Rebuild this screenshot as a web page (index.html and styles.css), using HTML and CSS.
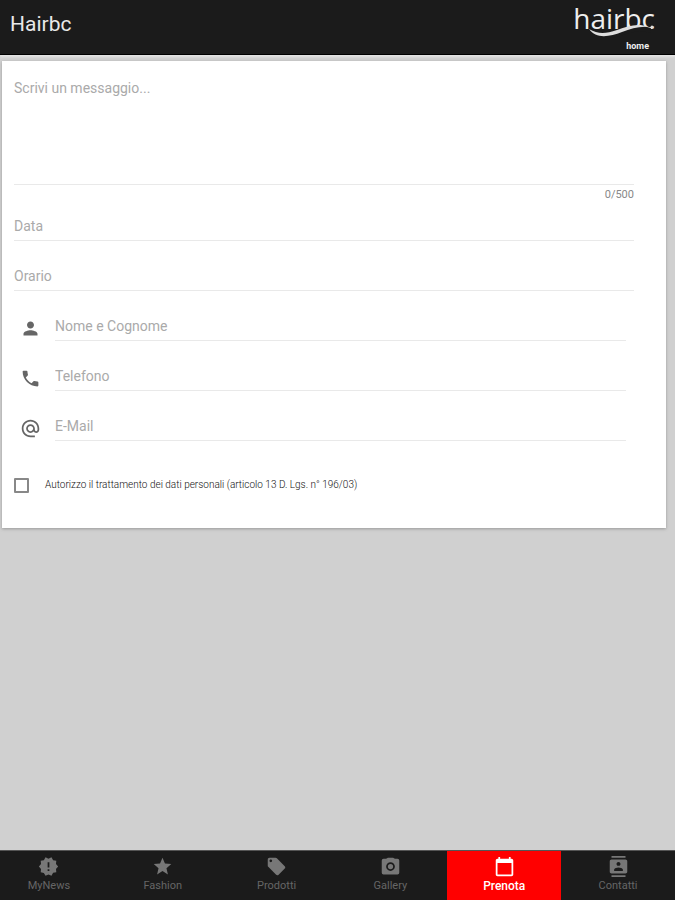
FILE: index.html
```html
<!DOCTYPE html>
<html lang="it">
<head>
    <meta charset="utf-8">
    <meta name="viewport" content="width=device-width, initial-scale=1">
    <title>Hairbc</title>
    <link rel="stylesheet" href="styles.css">
</head>
<body>

<header class="topbar">
  <h1>Hairbc</h1>
  <a class="logo" href="#">
    <span class="logo-name">hairbc</span>
    <svg class="swoosh" viewBox="0 0 66 16" aria-hidden="true">
      <path d="M20 12C36 8 42 3 54 4L62 6L61 11C46 7 40 12 24 16Z" fill="#1b1b1b"/>
      <path d="M0 7C9 12 16 12 28 8C40 4 48 1 60 5C50 4 42 7 33 10C20 15 7 17 0 7Z" fill="#ddd"/>
      <circle cx="63" cy="5" r="1.500" fill="#ddd"/>
    </svg>
    <span class="logo-sub">home</span>
  </a>
</header>

<main>
  <form class="card">
    <textarea class="message" aria-label="Messaggio" maxlength="500" placeholder="Scrivi un messaggio..."></textarea>
    <div class="counter">0/500</div>

    <input class="field" type="text" aria-label="Data" placeholder="Data">
    <input class="field" type="text" aria-label="Orario" placeholder="Orario">

    <div class="row">
      <label for="nome"><svg viewBox="0 0 24 24"><path d="M12 12c2.21 0 4-1.79 4-4s-1.79-4-4-4-4 1.79-4 4 1.79 4 4 4zm0 2c-2.67 0-8 1.34-8 4v2h16v-2c0-2.66-5.33-4-8-4z"/></svg></label>
      <input class="field" id="nome" type="text" aria-label="Nome e Cognome" placeholder="Nome e Cognome">
    </div>
    <div class="row">
      <label for="tel"><svg viewBox="0 0 24 24"><path d="M6.62 10.79c1.44 2.83 3.76 5.14 6.59 6.59l2.2-2.2c.27-.27.67-.36 1.02-.24 1.12.37 2.33.57 3.57.57.55 0 1 .45 1 1V20c0 .55-.45 1-1 1-9.39 0-17-7.61-17-17 0-.55.45-1 1-1h3.5c.55 0 1 .45 1 1 0 1.25.2 2.45.57 3.57.11.35.03.74-.25 1.02l-2.2 2.2z"/></svg></label>
      <input class="field" id="tel" type="tel" aria-label="Telefono" placeholder="Telefono">
    </div>
    <div class="row">
      <label for="email"><svg viewBox="0 0 24 24"><path d="M12 2C6.480 2 2 6.480 2 12s4.480 10 10 10h5v-2h-5c-4.340 0-8-3.660-8-8s3.660-8 8-8 8 3.660 8 8v1.430c0 .79-.71 1.570-1.500 1.570s-1.500-.78-1.500-1.570V12c0-2.760-2.240-5-5-5s-5 2.240-5 5 2.240 5 5 5c1.380 0 2.640-.56 3.540-1.470.65.890 1.770 1.470 2.960 1.470 1.970 0 3.500-1.600 3.500-3.570V12c0-5.520-4.480-10-10-10zm0 13c-1.660 0-3-1.340-3-3s1.340-3 3-3 3 1.340 3 3-1.340 3-3 3z"/></svg></label>
      <input class="field" id="email" type="email" aria-label="E-Mail" placeholder="E-Mail">
    </div>

    <label class="privacy">
      <input type="checkbox">
      <span>Autorizzo il trattamento dei dati personali (articolo 13 D. Lgs. n° 196/03)</span>
    </label>
  </form>
</main>

<nav class="tabs">
  <a href="#">
    <svg viewBox="0 0 24 24"><path d="M23 12l-2.440-2.780.34-3.680-3.610-.82-1.890-3.180L12 3 8.600 1.540 6.710 4.720l-3.610.81.340 3.680L1 12l2.440 2.780-.34 3.690 3.610.82 1.890 3.180L12 21l3.400 1.460 1.890-3.180 3.610-.82-.34-3.680L23 12zm-10 5h-2v-2h2v2zm0-4h-2V7h2v6z"/></svg>
    <span>MyNews</span>
  </a>
  <a href="#">
    <svg viewBox="0 0 24 24"><path d="M12 17.270L18.180 21l-1.640-7.030L22 9.240l-7.190-.61L12 2 9.190 8.630 2 9.240l5.460 4.730L5.820 21z"/></svg>
    <span>Fashion</span>
  </a>
  <a href="#">
    <svg viewBox="0 0 24 24"><path d="M21.410 11.580l-9-9C12.050 2.220 11.550 2 11 2H4c-1.100 0-2 .9-2 2v7c0 .55.22 1.050.59 1.420l9 9c.36.36.86.58 1.410.58.55 0 1.050-.22 1.410-.59l7-7c.37-.36.59-.86.59-1.410 0-.55-.23-1.060-.59-1.420zM5.500 7C4.670 7 4 6.330 4 5.500S4.670 4 5.500 4 7 4.670 7 5.500 6.330 7 5.500 7z"/></svg>
    <span>Prodotti</span>
  </a>
  <a href="#">
    <svg viewBox="0 0 24 24"><path fill-rule="evenodd" d="M4 3h3l2-1h6l2 1h3a2 2 0 0 1 2 2v14a2 2 0 0 1-2 2H4a2 2 0 0 1-2-2V5a2 2 0 0 1 2-2zm8 4a5 5 0 1 0 0 10 5 5 0 0 0 0-10zm0 2a3 3 0 1 1 0 6 3 3 0 0 1 0-6z"/></svg>
    <span>Gallery</span>
  </a>
  <a class="active" href="#">
    <svg viewBox="0 0 24 24"><path d="M20 3h-1V1h-2v2H7V1H5v2H4c-1.100 0-2 .9-2 2v16c0 1.100.9 2 2 2h16c1.100 0 2-.9 2-2V5c0-1.100-.9-2-2-2zm0 18H4V8h16v13z"/></svg>
    <span>Prenota</span>
  </a>
  <a href="#">
    <svg viewBox="0 0 24 24"><path d="M20 0H4v2h16V0zM4 24h16v-2H4v2zM20 4H4c-1.100 0-2 .9-2 2v12c0 1.100.9 2 2 2h16c1.100 0 2-.9 2-2V6c0-1.100-.9-2-2-2zm-8 2.750c1.240 0 2.250 1.010 2.250 2.250s-1.010 2.250-2.250 2.250S9.750 10.240 9.750 9 10.760 6.750 12 6.750zM17 17H7v-1.500c0-1.670 3.330-2.500 5-2.500s5 .83 5 2.500V17z"/></svg>
    <span>Contatti</span>
  </a>
</nav>

</body>
</html>
```

FILE: styles.css
```css
* {
  box-sizing: border-box;
  margin: 0;
  padding: 0;
}
body {
  display: flex;
  flex-direction: column;
  min-height: 100vh;
  overflow-x: hidden;
  background-color: #d0d0d0;
  font-family: Roboto, sans-serif;
}
.topbar {
  display: flex;
  justify-content: space-between;
  height: 55px;
  padding: 0 20px 0 10px;
  background-color: #1b1b1b;
  border-bottom: 1px solid #000;
  box-shadow: 0 2px 2px #e4e4e4;
  color: #e8e8e8;
}
.topbar h1 {
  font-size: 21px;
  font-weight: 400;
  line-height: 48px;
}
.logo {
  position: relative;
  display: flex;
  flex-direction: column;
  justify-content: space-between;
  padding: 2px 0 3px;
  color: #eee;
  text-decoration: none;
}
.logo-name {
  font-family: "Open Sans", sans-serif;
  font-size: 28px;
  line-height: 32px;
}
.swoosh {
  position: absolute;
  left: 16px;
  top: 22px;
  width: 66px;
  height: 16px;
}
.logo-sub {
  padding-right: 6px;
  font-size: 9px;
  font-weight: 700;
  line-height: 10px;
  text-align: right;
}
main {
  flex: 1;
  padding: 6px 9px 20px 2px;
}
.card {
  padding: 16px 32px 34px 12px;
  background-color: #fff;
  box-shadow: 0 1px 3px #999;
}
.message,
.field {
  display: block;
  width: 100%;
  border: 0;
  border-bottom: 1px solid #e9e9e9;
  border-radius: 0;
  outline: none;
  background: none;
  color: #444;
  font-family: Roboto, sans-serif;
  font-size: 14px;
}
.message {
  height: 108px;
  line-height: 22px;
  resize: none;
}
.field {
  height: 30px;
  margin-bottom: 20px;
}
.message::placeholder,
.field::placeholder {
  color: #aaa;
  opacity: 1;
}
.counter {
  height: 26px;
  color: #888;
  font-size: 11px;
  line-height: 20px;
  text-align: right;
}
.row {
  display: flex;
  padding-right: 8px;
}
.row label {
  flex: none;
  width: 41px;
  padding: 7px 0 0 6px;
}
.row svg {
  display: block;
  width: 21px;
  height: 21px;
  fill: #666;
}
.privacy {
  display: flex;
  align-items: center;
  gap: 16px;
  margin-top: 15px;
  color: #111;
  font-size: 10px;
  font-weight: 300;
  line-height: 18px;
}
.privacy input {
  appearance: none;
  width: 15px;
  height: 15px;
  border: 2px solid #888;
  border-radius: 1px;
}
.privacy input:checked {
  background-color: #888;
}
.tabs {
  display: flex;
  height: 49px;
  margin-left: -8px;
  background-color: #1b1b1b;
  box-shadow: 0 -1px 0 #555;
}
.tabs a {
  display: flex;
  flex: 1;
  flex-direction: column;
  align-items: center;
  padding-top: 5px;
  color: #666;
  font-size: 11px;
  line-height: 18px;
  text-decoration: none;
}
.tabs svg {
  width: 21px;
  height: 21px;
  fill: #777;
}
.tabs .active {
  background-color: #f00;
  color: #fff;
  font-size: 12px;
  font-weight: 500;
}
.tabs .active svg {
  fill: #fff;
}
```
